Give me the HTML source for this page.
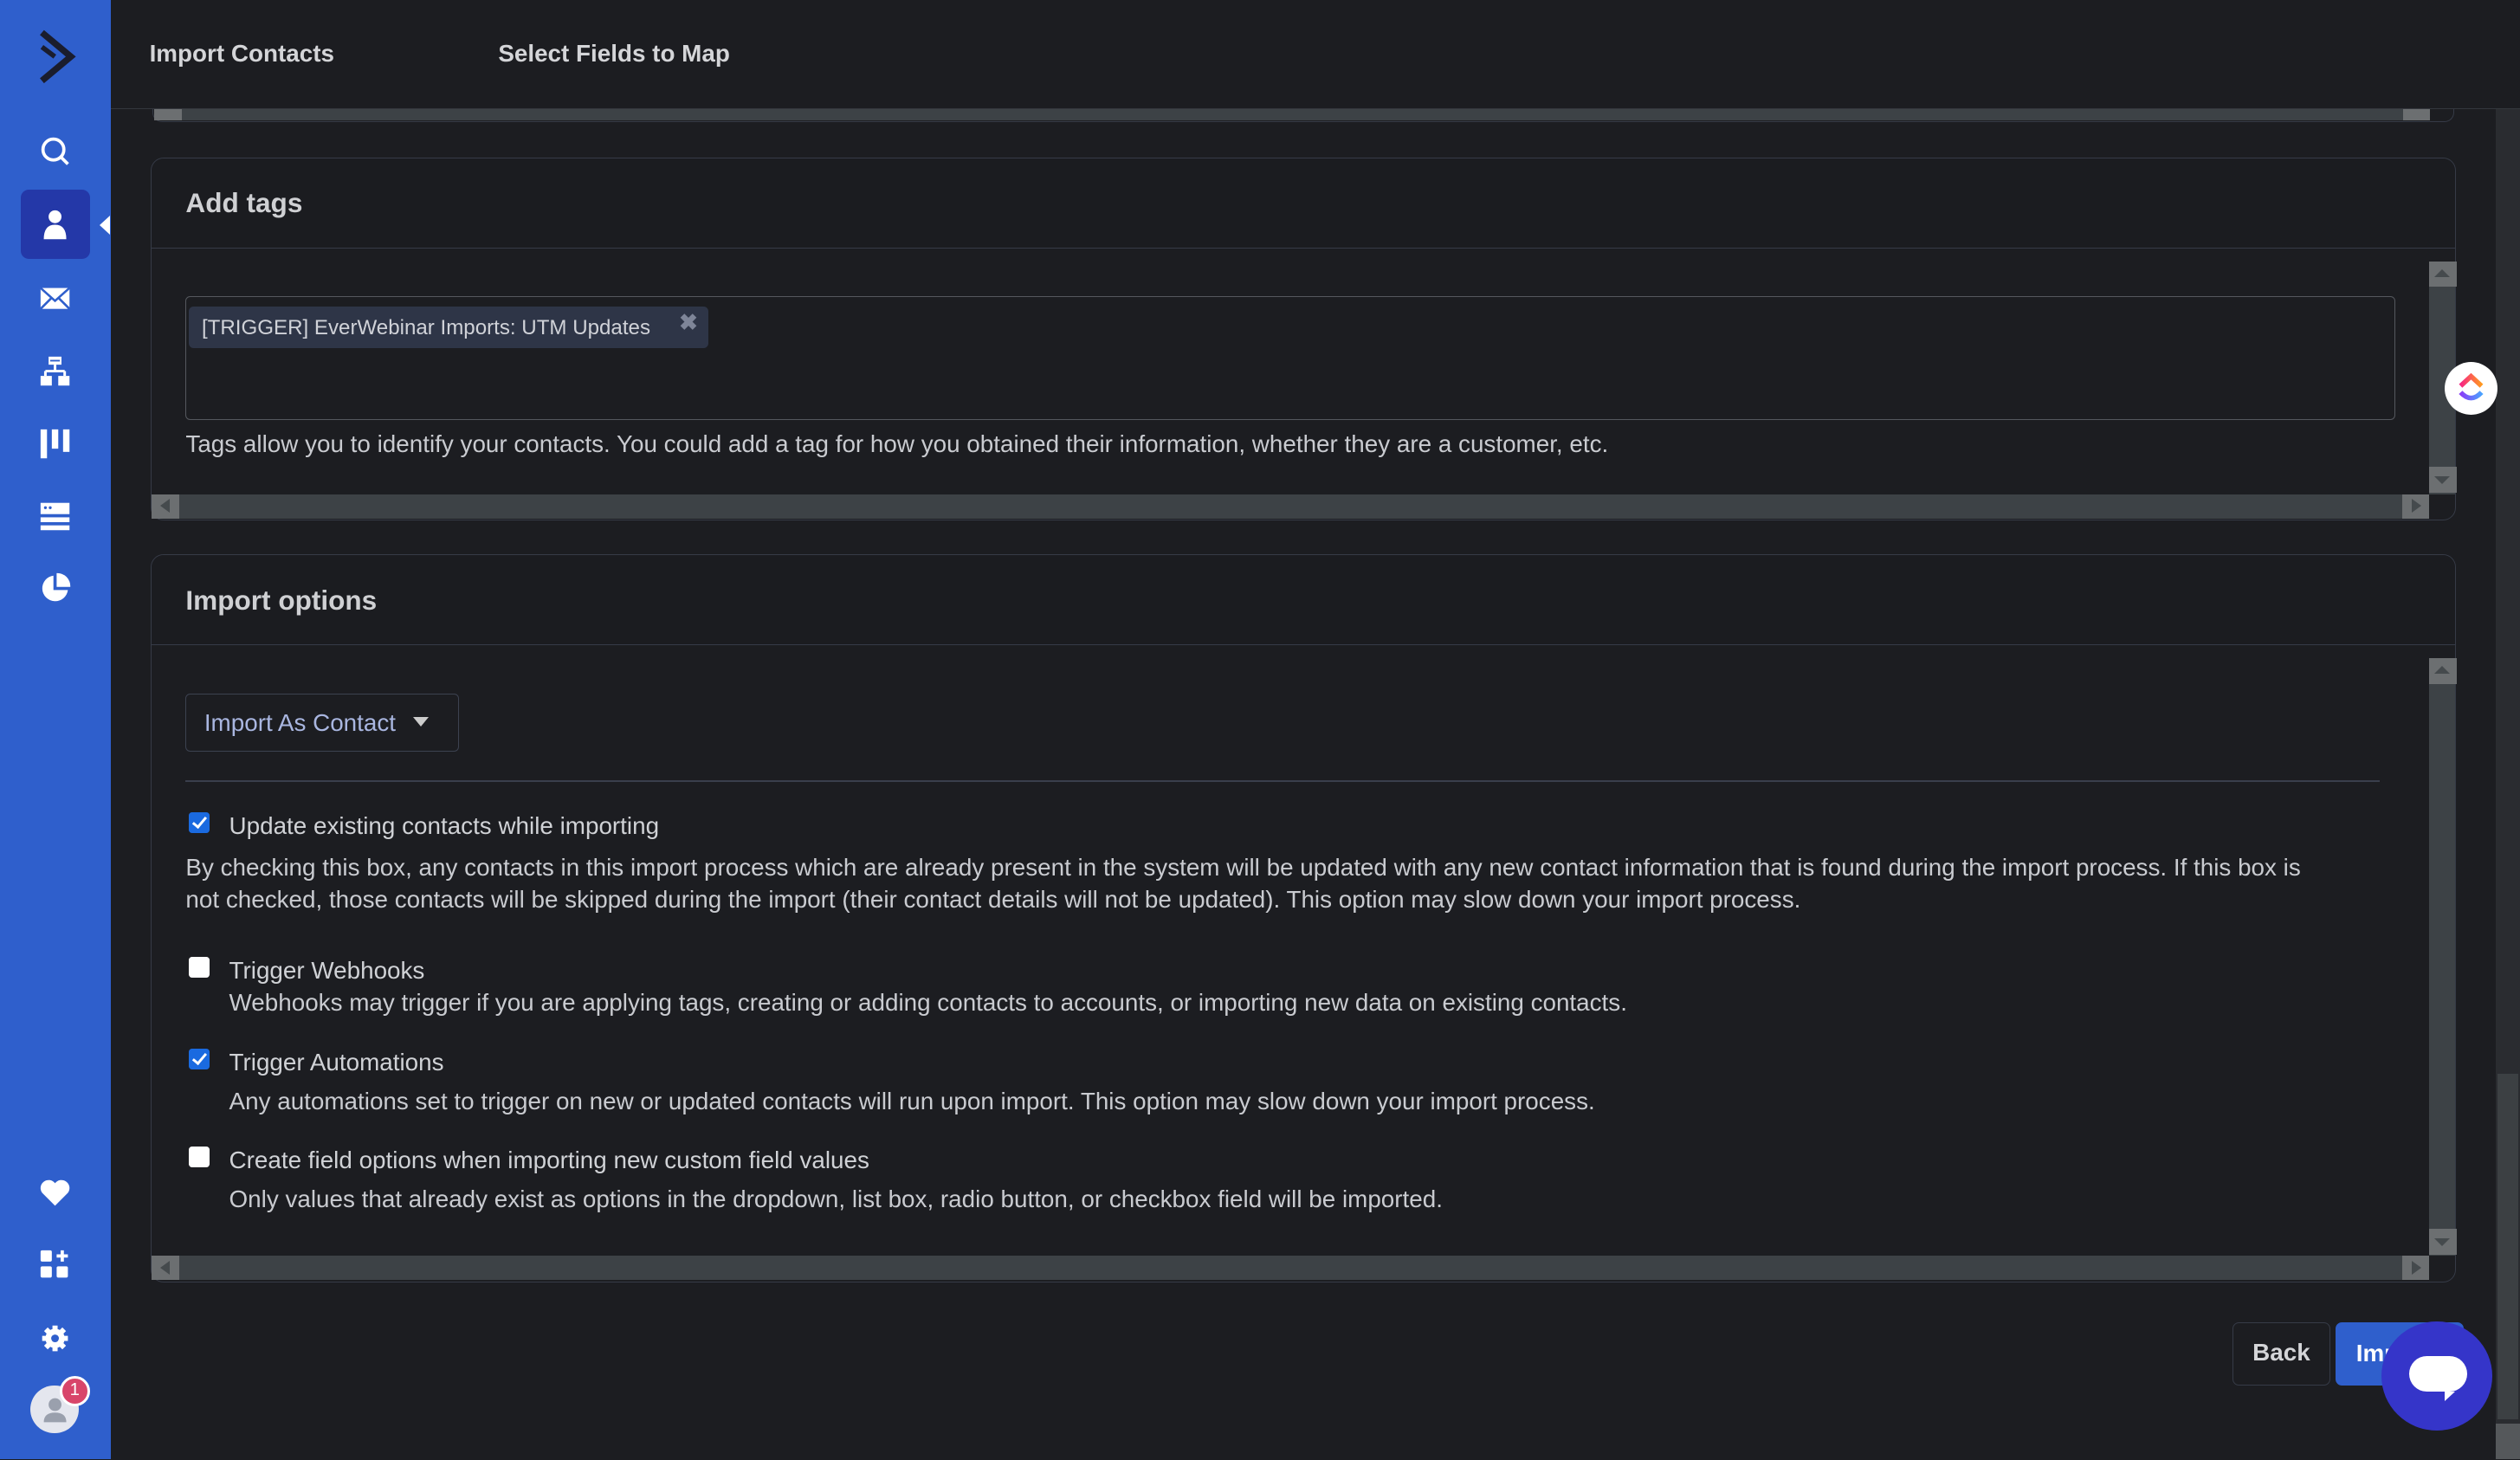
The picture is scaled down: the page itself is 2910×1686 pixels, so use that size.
<!DOCTYPE html>
<html><head><meta charset="utf-8"><style>
*{margin:0;padding:0;box-sizing:border-box}
html,body{width:2910px;height:1686px;overflow:hidden;background:#1c1d21}
#root{zoom:1.8559;width:1568px;height:908px;position:relative;font-family:"Liberation Sans",sans-serif;color:#c9cbd0;background:#1c1d21}
.a{position:absolute}
.side{left:0;top:0;width:69px;height:908px;background:#2f5fcc}
.ic{position:absolute;left:24px;width:20px;height:20px}
.hdr{left:69px;top:0;width:1499px;height:68px;background:#1c1d21;border-bottom:1px solid #34373d}
.hdr span{position:absolute;top:25px;font-size:15px;font-weight:bold;color:#d4d5d8}
.panel{border:1px solid #363b47;border-radius:8px;background:#1c1d21}
.ph{position:absolute;left:0;top:0;right:0;height:56px;border-bottom:1px solid #363b47;background:#1b1c20;border-radius:8px 8px 0 0}
.ph span{position:absolute;left:21px;top:18px;font-size:17px;font-weight:bold;color:#cfd0d3}
.hs{position:absolute;left:0;height:15px;background:#3d4246}
.btn{position:absolute;width:17px;height:15px;background:#6c6f71}
.btn.l:after,.btn.r:after,.btn.u:after,.btn.d:after{content:"";position:absolute;width:0;height:0}
.btn.l:after{left:5px;top:3px;border-top:4.5px solid transparent;border-bottom:4.5px solid transparent;border-right:6px solid #454a4d}
.btn.r:after{left:6px;top:3px;border-top:4.5px solid transparent;border-bottom:4.5px solid transparent;border-left:6px solid #454a4d}
.btn.u:after{left:3px;top:5px;border-left:5px solid transparent;border-right:5px solid transparent;border-bottom:5px solid #454a4d}
.btn.d:after{left:3px;top:6px;border-left:5px solid transparent;border-right:5px solid transparent;border-top:5px solid #454a4d}
.t15{font-size:15px;white-space:nowrap}
.cb{position:absolute;width:13px;height:13px;border-radius:2px;background:#fff}
.cb.on{background:#1a6ae0}
.cb.on:after{content:"";position:absolute;left:4px;top:1px;width:3px;height:7px;border:solid #fff;border-width:0 2px 2px 0;transform:rotate(40deg)}
</style></head><body><div id="root">

<div class="a side">
 <svg class="a" style="left:22px;top:17px" width="26" height="36" viewBox="0 0 26 36"><path d="M4 3 L22 18 L4 33" fill="none" stroke="#1a1d2e" stroke-width="4"/><path d="M4 12 L12 18" stroke="#1a1d2e" stroke-width="3"/></svg>
 <svg class="ic" style="top:84px" viewBox="0 0 20 20"><circle cx="9" cy="9" r="6.5" fill="none" stroke="#fff" stroke-width="2"/><path d="M13.5 13.5 L18 18" stroke="#fff" stroke-width="2"/></svg>
 <div class="a" style="left:13px;top:118px;width:43px;height:43px;background:#2438a8;border-radius:5px"></div>
 <div class="a" style="left:62px;top:134px;width:0;height:0;border-top:6px solid transparent;border-bottom:6px solid transparent;border-right:7px solid #fff"></div>
 <svg class="ic" style="top:130px" viewBox="0 0 20 20"><circle cx="10" cy="5" r="4" fill="#fff"/><path d="M3 19 Q3 10 10 10 Q17 10 17 19Z" fill="#fff"/></svg>
 <svg class="ic" style="top:176px" viewBox="0 0 20 20"><rect x="1" y="3" width="18" height="13" fill="#fff"/><path d="M1 3 L10 11 L19 3 M1 16 L8 9 M19 16 L12 9" fill="none" stroke="#2f5fcc" stroke-width="1.4"/></svg>
 <svg class="ic" style="top:221px" viewBox="0 0 20 20"><rect x="6" y="1" width="8" height="5" fill="#fff"/><rect x="7" y="3" width="6" height="1" fill="#2f5fcc"/><path d="M10 6V10 M4 10H16 M4 10V13 M16 10V13" stroke="#fff" stroke-width="1.6" fill="none"/><rect x="1" y="13" width="7" height="6" fill="#fff"/><rect x="12" y="13" width="7" height="6" fill="#fff"/></svg>
 <svg class="ic" style="top:266px" viewBox="0 0 20 20"><rect x="1" y="1" width="4" height="18" fill="#fff"/><rect x="8" y="1" width="4" height="12" fill="#fff"/><rect x="15" y="1" width="4" height="14" fill="#fff"/></svg>
 <svg class="ic" style="top:311px" viewBox="0 0 20 20"><rect x="1" y="2" width="18" height="7" fill="#fff"/><rect x="1" y="11" width="18" height="3" fill="#fff"/><rect x="1" y="16" width="18" height="3" fill="#fff"/><circle cx="4" cy="5" r=".9" fill="#2f5fcc"/><circle cx="7" cy="5" r=".9" fill="#2f5fcc"/></svg>
 <svg class="ic" style="top:356px" viewBox="0 0 20 20"><path d="M9 2 A8 8 0 1 0 18 11 L9 11Z" fill="#fff"/><path d="M11 0.5 A8 8 0 0 1 19.5 9 L11 9Z" fill="#fff"/></svg>
 <svg class="ic" style="top:732px" viewBox="0 0 20 20"><path d="M10 18 L2 10 A4.5 4.5 0 0 1 10 4 A4.5 4.5 0 0 1 18 10Z" fill="#fff"/></svg>
 <svg class="ic" style="top:777px" viewBox="0 0 20 20"><rect x="1" y="1" width="7" height="7" rx="1" fill="#fff"/><rect x="1" y="11" width="7" height="7" rx="1" fill="#fff"/><rect x="11" y="11" width="7" height="7" rx="1" fill="#fff"/><path d="M14.5 1V8 M11 4.5H18" stroke="#fff" stroke-width="2"/></svg>
 <svg class="ic" style="top:823px" viewBox="0 0 20 20"><circle cx="10" cy="10" r="6" fill="#fff"/><g stroke="#fff" stroke-width="3.2"><path d="M10 2V18 M2 10H18 M4.3 4.3L15.7 15.7 M15.7 4.3L4.3 15.7"/></g><circle cx="10" cy="10" r="2.4" fill="#2f5fcc"/></svg>
 <div class="a" style="left:19px;top:862px;width:30px;height:30px;border-radius:50%;background:#e4e6ee"></div>
 <svg class="a" style="left:24px;top:867px" width="20" height="20" viewBox="0 0 20 20"><circle cx="10" cy="7" r="4" fill="#9aa0ad"/><path d="M3 18 Q3 12 10 12 Q17 12 17 18Z" fill="#9aa0ad"/></svg>
 <div class="a" style="left:37px;top:856px;width:19px;height:19px;border-radius:50%;background:#d8456a;border:2px solid #fff;color:#fff;font-size:11px;text-align:center;line-height:15px">1</div>
</div>

<div class="a hdr"><span style="left:24px">Import Contacts</span><span style="left:241px">Select Fields to Map</span></div>

<div class="a" style="left:95px;top:68px;width:1432px;height:8px;border:1px solid #363b47;border-top:none;border-radius:0 0 6px 6px"></div>
<div class="a" style="left:96px;top:68px;width:1416px;height:7px;background:#3d4246"></div>
<div class="a" style="left:96px;top:68px;width:17px;height:7px;background:#6c6f71"></div>
<div class="a" style="left:1495px;top:68px;width:17px;height:7px;background:#6c6f71"></div>

<div class="a panel" style="left:94px;top:98px;width:1434px;height:226px">
 <div class="ph"><span>Add tags</span></div>
 <div class="a" style="left:21px;top:86px;width:1375px;height:77px;border:1px solid #55585e;border-radius:3px"></div>
 <div class="a" style="left:23px;top:92px;width:323px;height:26px;background:#2e3547;border-radius:3px;font-size:13px;color:#d0d2d8;padding:6px 0 0 8px;white-space:nowrap">[TRIGGER] EverWebinar Imports: UTM Updates<span style="position:absolute;left:305px;top:2px;color:#7e8598;font-weight:bold;font-size:14px">✖</span></div>
 <div class="a t15" style="left:21px;top:169px">Tags allow you to identify your contacts. You could add a tag for how you obtained their information, whether they are a customer, etc.</div>
 <div class="a" style="left:1417px;top:64px;width:16px;height:145px;background:#3d4246"></div>
 <div class="btn u" style="left:1417px;top:64px;height:16px"></div>
 <div class="btn d" style="left:1417px;top:192px;height:16px"></div>
 <div class="hs" style="top:209px;width:1417px"></div>
 <div class="btn l" style="left:0;top:209px"></div>
 <div class="btn r" style="left:1400px;top:209px"></div>
</div>

<div class="a panel" style="left:94px;top:345px;width:1434px;height:453px">
 <div class="ph"><span>Import options</span></div>
 <div class="a" style="left:21px;top:86px;width:170px;height:36px;border:1px solid #3c4250;border-radius:3px;font-size:15px;color:#a9b6e0;padding:9px 0 0 11px;white-space:nowrap">Import As Contact<span style="position:absolute;left:141px;top:14px;border-left:5px solid transparent;border-right:5px solid transparent;border-top:6px solid #ccc"></span></div>
 <div class="a" style="left:21px;top:140px;width:1365px;height:1px;background:#3a3f4c"></div>
 <div class="cb on" style="left:23px;top:160px"></div>
 <div class="a t15" style="left:48px;top:160px;color:#d0d2d6">Update existing contacts while importing</div>
 <div class="a t15" style="left:21px;top:184px;line-height:20px">By checking this box, any contacts in this import process which are already present in the system will be updated with any new contact information that is found during the import process. If this box is<br>not checked, those contacts will be skipped during the import (their contact details will not be updated). This option may slow down your import process.</div>
 <div class="cb" style="left:23px;top:250px"></div>
 <div class="a t15" style="left:48px;top:250px;color:#d0d2d6">Trigger Webhooks</div>
 <div class="a t15" style="left:48px;top:270px">Webhooks may trigger if you are applying tags, creating or adding contacts to accounts, or importing new data on existing contacts.</div>
 <div class="cb on" style="left:23px;top:307px"></div>
 <div class="a t15" style="left:48px;top:307px;color:#d0d2d6">Trigger Automations</div>
 <div class="a t15" style="left:48px;top:331px">Any automations set to trigger on new or updated contacts will run upon import. This option may slow down your import process.</div>
 <div class="cb" style="left:23px;top:368px"></div>
 <div class="a t15" style="left:48px;top:368px;color:#d0d2d6">Create field options when importing new custom field values</div>
 <div class="a t15" style="left:48px;top:392px">Only values that already exist as options in the dropdown, list box, radio button, or checkbox field will be imported.</div>
 <div class="a" style="left:1417px;top:64px;width:16px;height:372px;background:#3d4246"></div>
 <div class="btn u" style="left:1417px;top:64px;height:16px"></div>
 <div class="btn d" style="left:1417px;top:419px;height:16px"></div>
 <div class="hs" style="top:436px;width:1417px"></div>
 <div class="btn l" style="left:0;top:436px"></div>
 <div class="btn r" style="left:1400px;top:436px"></div>
</div>

<div class="a" style="left:1389px;top:823px;width:61px;height:39px;border:1px solid #363b47;border-radius:4px;font-size:15px;font-weight:bold;color:#d4d5d8;text-align:center;line-height:37px">Back</div>
<div class="a" style="left:1453px;top:823px;width:80px;height:39px;background:#2f5fcc;border-radius:4px;font-size:15px;font-weight:bold;color:#fff;padding-left:13px;line-height:39px">Import</div>
<div class="a" style="left:1482px;top:822px;width:69px;height:68px;border-radius:50%;background:#3535c9"></div>
<div class="a" style="left:1499px;top:844px;width:36px;height:22px;border-radius:11px;background:#fff"></div>
<div class="a" style="left:1521px;top:866px;width:0;height:0;border-left:7px solid #fff;border-bottom:6px solid transparent"></div>

<div class="a" style="left:1553px;top:68px;width:15px;height:840px;background:#2a2c30"></div>
<div class="a" style="left:1554px;top:668px;width:13px;height:215px;background:#3c4043"></div>
<div class="a" style="left:1553px;top:886px;width:15px;height:22px;background:#55585b"></div>

<div class="a" style="left:1521px;top:225px;width:33px;height:33px;border-radius:50%;background:#fff"></div>
<svg class="a" style="left:1527px;top:231px" width="21" height="21" viewBox="0 0 21 21"><defs><linearGradient id="g1" x1="0" x2="1"><stop offset="0" stop-color="#f72585"/><stop offset="1" stop-color="#ff9a1f"/></linearGradient><linearGradient id="g2" x1="0" x2="1"><stop offset="0" stop-color="#8b3cf7"/><stop offset="1" stop-color="#4aa3ff"/></linearGradient></defs><path d="M4 9 L10.5 3 L17 9" fill="none" stroke="url(#g1)" stroke-width="3"/><path d="M4 13 Q10.5 20 17 13" fill="none" stroke="url(#g2)" stroke-width="3"/></svg>

</div></body></html>
